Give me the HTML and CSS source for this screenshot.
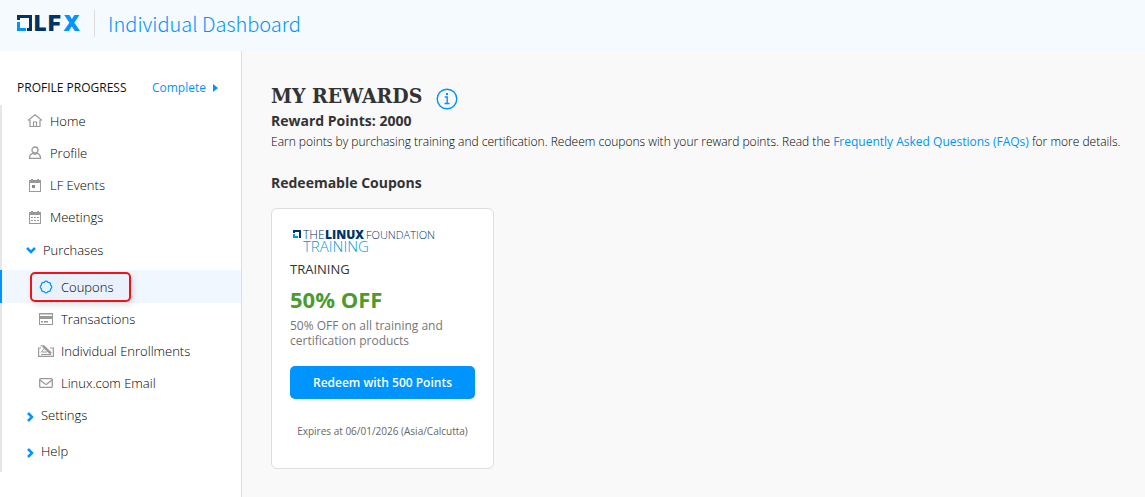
FILE: index.html
```html
<!DOCTYPE html>
<html lang="en">
<head>
<meta charset="utf-8">
<meta name="viewport" content="width=device-width, initial-scale=1">
<title>LFX Individual Dashboard</title>
<link rel="stylesheet" href="styles.css">
</head>
<body>
<header class="topbar">
  <a class="brand" href="#" aria-label="LFX">
    <svg class="brand-logo" width="66" height="18" viewBox="0 0 66 18">
      <path fill="#003366" d="M1 0h15v16h-5v-3h2V3H4v2H1z"/>
      <path fill="#0094ff" d="M1 7h3v6h6v3H1z"/>
      <text class="logo-letters" x="18" y="16" fill="#003366">L</text>
      <text class="logo-letters" x="32" y="16" fill="#003366">F</text>
      <text class="logo-letters" x="47" y="16" fill="#0094ff">X</text>
    </svg>
  </a>
  <a class="app-name" href="#">Individual Dashboard</a>
</header>
<div class="layout">
  <aside class="sidebar">
    <div class="progress">
      <span class="progress-label">PROFILE PROGRESS</span>
      <a class="progress-link" href="#">Complete
        <svg width="5" height="8" viewBox="0 0 5 8"><path fill="#0094ff" d="M0 0l5 4-5 4z"/></svg>
      </a>
    </div>
    <nav class="nav">
      <a class="nav-item" href="#">
        <svg class="icon" width="16" height="16" viewBox="0 0 16 16" fill="none" stroke="#999" stroke-width="1.200"><path d="M1 7.500L8 1.800l7 5.700M3 7v6.500h10V7M6.500 13.500V9h3v4.500"/></svg>
        Home</a>
      <a class="nav-item" href="#">
        <svg class="icon" width="16" height="16" viewBox="0 0 16 16" fill="none" stroke="#999" stroke-width="1.300"><circle cx="8" cy="5" r="3"/><path d="M5.800 8.200C3.500 9.200 2.500 10.500 2.500 13.300h11c0-2.800-1-4.100-3.300-5.100C9 9.600 7 9.600 5.800 8.200z"/></svg>
        Profile</a>
      <a class="nav-item" href="#">
        <svg class="icon" width="16" height="16" viewBox="0 0 16 16"><path fill="#999" fill-rule="evenodd" d="M4 2h2v1h4V2h2v1h2v12H2V3h2zM3 6v8h10V6z"/><path fill="#888" d="M5 8h3v3H5z"/></svg>
        LF Events</a>
      <a class="nav-item" href="#">
        <svg class="icon" width="16" height="16" viewBox="0 0 16 16"><path fill="#999" fill-rule="evenodd" d="M4 2h2v1h4V2h2v1h2v12H2V3h2zM3 6v8h10V6z"/><path fill="#999" d="M4 8h2v1H4zM7 8h2v1H7zM10 8h2v1h-2zM4 11h2v1H4zM7 11h2v1H7zM10 11h2v1h-2z"/></svg>
        Meetings</a>
      <a class="nav-item nav-group purchases" href="#">
        <svg class="chevron" width="10" height="8" viewBox="0 0 10 8" fill="none" stroke="#0094ff" stroke-width="2.500"><path d="M1 2l4 4 4-4"/></svg>
        Purchases</a>
      <a class="nav-item nav-sub active" href="#">
        <span class="highlight">
        <svg class="icon" width="16" height="16" viewBox="0 0 16 16" fill="none" stroke="#0094ff" stroke-width="1.200"><path d="M6 3.400Q8 1 10 3.400Q12.700 3.300 12.600 6Q15 8 12.600 10Q12.700 12.700 10 12.600Q8 15 6 12.600Q3.300 12.700 3.400 10Q1 8 3.400 6Q3.300 3.300 6 3.400z"/></svg>
        Coupons</span></a>
      <a class="nav-item nav-sub" href="#">
        <svg class="icon" width="16" height="16" viewBox="0 0 16 16"><path fill="#999" fill-rule="evenodd" d="M1 2h14v12H1zM2 3.500V5h12V3.500zM2 8v5h12V8z"/><path fill="#999" d="M3 10h2v1.500H3zM6 10h4v1.500H6z"/></svg>
        Transactions</a>
      <a class="nav-item nav-sub" href="#">
        <svg class="icon" width="16" height="16" viewBox="0 0 16 16" fill="none" stroke="#999"><path stroke-width="1.200" d="M3 5H.6v8.400h14.800V5H12M3 11.500h10"/><path stroke-width="2.400" d="M5 3l8 7.500"/><path d="M3 9.500l3-4M4 9h5M2.500 3l3-.5"/></svg>
        Individual Enrollments</a>
      <a class="nav-item nav-sub" href="#">
        <svg class="icon" width="16" height="16" viewBox="0 0 16 16" fill="none" stroke="#999" stroke-width="1.300"><rect x="1.700" y="3.600" width="12.600" height="8.800" rx="1"/><path d="M2 5l4.700 3.800q1.300 1 2.600 0L14 5"/></svg>
        Linux.com Email</a>
      <a class="nav-item nav-group" href="#">
        <svg class="chevron side" width="8" height="10" viewBox="0 0 8 10" fill="none" stroke="#0094ff" stroke-width="2.500"><path d="M2 1l4 4-4 4"/></svg>
        Settings</a>
      <a class="nav-item nav-group help" href="#">
        <svg class="chevron side" width="8" height="10" viewBox="0 0 8 10" fill="none" stroke="#0094ff" stroke-width="2.500"><path d="M2 1l4 4-4 4"/></svg>
        Help</a>
    </nav>
  </aside>
  <main class="content">
    <div class="title-row">
      <h1 class="title">MY REWARDS</h1>
      <button class="info" type="button" aria-label="About rewards">
        <svg width="22" height="22" viewBox="0 0 22 22" fill="none" stroke="#0094ff" stroke-width="1.400"><circle cx="11" cy="11" r="9.800"/><path d="M8.700 9h2.500v6.500M8.500 15.500h5"/><path stroke-width="2" d="M10 6h2"/></svg>
      </button>
    </div>
    <h2 class="points">Reward Points: 2000</h2>
    <p class="intro">Earn points by purchasing training and certification. Redeem coupons with your reward points. Read the <a href="#">Frequently Asked Questions (FAQs)</a> for more details.</p>
    <h2 class="section-title">Redeemable Coupons</h2>
    <article class="card">
      <svg class="card-logo" width="148" height="24" viewBox="0 0 148 24">
        <path fill="#003366" d="M3 1h8v8H9V3H5v1H3z"/>
        <path fill="#0099dc" d="M3 5h2v2h3v2H3z"/>
        <text class="logo-the" x="13" y="10" fill="#003366">THE</text>
        <text class="logo-heavy" x="35" y="10" fill="#003366">LINUX</text>
        <text class="logo-thin" x="76" y="10" fill="#003366">FOUNDATION</text>
        <text class="logo-sub" x="13" y="23" fill="#0099dc">TRAINING</text>
      </svg>
      <h3 class="category">TRAINING</h3>
      <p class="offer">50% OFF</p>
      <p class="description">50% OFF on all training and certification products</p>
      <button class="redeem" type="button">Redeem with 500 Points</button>
      <p class="expiry">Expires at 06/01/2026 (Asia/Calcutta)</p>
    </article>
  </main>
</div>
</body>
</html>
```
FILE: styles.css
```css
* { box-sizing: border-box; }

body {
  margin: 0;
  min-height: 100vh;
  display: flex;
  flex-direction: column;
  background: #f9f9f9;
  color: #333;
  font-family: "Open Sans", sans-serif;
  font-size: 13px;
}

h1, h2, h3, p { margin: 0; }
a { color: #0094ff; text-decoration: none; }
svg { display: block; flex: none; overflow: visible; }

.topbar {
  display: flex;
  align-items: center;
  height: 51px;
  padding: 0 16px 4px;
  background: #f5faff;
}

.brand { padding-right: 12px; }

.logo-letters { font: 900 22px Inter, sans-serif; }

.app-name {
  padding-left: 13px;
  border-left: 1px solid #ddd;
  font-family: "Noto Sans CJK SC", sans-serif;
  font-size: 20px;
  font-weight: 300;
  line-height: 27px;
}

.layout { display: flex; flex: 1; }

.sidebar {
  flex: none;
  width: 242px;
  padding-top: 28px;
  background: #fff;
  border-right: 1px solid #dedee2;
}

.progress {
  display: flex;
  justify-content: space-between;
  padding: 0 23px 8px 17px;
  font-size: 12px;
  line-height: 18px;
}

.progress-label { color: #111; }
.progress-link { display: flex; align-items: center; gap: 7px; }

.nav {
  display: flex;
  flex-direction: column;
  padding-bottom: 5px;
  border-left: 2px solid #e5e5ea;
}

.nav-item {
  display: flex;
  align-items: center;
  gap: 7px;
  height: 32px;
  padding-left: 25px;
  color: #000;
  font-weight: 300;
}

.nav-group { padding-left: 24px; }
.purchases { margin: 1px 0 4px; }
.help { margin-top: 4px; }
.side { margin-top: 3px; }

.nav-sub { padding-left: 36px; }

.active {
  height: 33px;
  margin-left: -2px;
  padding-left: 28px;
  background: #f0f7ff;
  border-left: 2px solid #0094ff;
}

.highlight {
  display: flex;
  align-items: center;
  gap: 7px;
  height: 30px;
  padding: 0 16px 0 6px;
  background: #e9f1fc;
  border: 2px solid #ee1318;
  border-radius: 5px;
  box-shadow: 2px 3px 6px rgba(0, 0, 0, .12);
}

.content {
  flex: 1;
  min-width: 0;
  padding: 30px 16px 28px 29px;
}

.title-row { display: flex; align-items: center; gap: 14px; height: 30px; }

.title {
  font-family: "Roboto Slab", "DejaVu Serif Condensed", "DejaVu Serif", serif;
  font-size: 21px;
  font-weight: 700;
  line-height: 28px;
}

.info {
  margin-top: 6px;
  padding: 0;
  border: 0;
  background: none;
}

.points, .section-title {
  font-size: 14px;
  font-weight: 700;
  line-height: 20px;
}

.intro { margin-top: 1px; color: #000; font-size: 12px; font-weight: 300; line-height: 20px; }
.intro a { font-weight: 400; }
.section-title { margin-top: 21px; }

.card {
  width: 223px;
  margin-top: 15px;
  padding: 20px 18px 29px;
  background: #fff;
  border: 1px solid #ddd;
  border-radius: 6px;
}

.logo-the { font: 300 12px "Open Sans", sans-serif; }
.logo-thin { font: 300 11px "Open Sans", sans-serif; }
.logo-heavy { font: 800 12px "Open Sans", sans-serif; }
.logo-sub { font: 300 15px "Open Sans", sans-serif; }

.category {
  margin-top: 6px;
  font-size: 13px;
  font-weight: 400;
  line-height: 20px;
}

.offer {
  margin-top: 5px;
  color: #4b9b2e;
  font-size: 22px;
  font-weight: 700;
  line-height: 30px;
}

.description {
  margin-top: 4px;
  color: #777;
  font-size: 12px;
  line-height: 15px;
}

.redeem {
  width: 100%;
  height: 33px;
  margin-top: 18px;
  border: 0;
  border-radius: 5px;
  background: #0094ff;
  color: #fff;
  font: 600 12px "Open Sans", sans-serif;
}

.expiry {
  margin-top: 25px;
  color: #666;
  font-size: 10px;
  line-height: 15px;
  text-align: center;
}
```
